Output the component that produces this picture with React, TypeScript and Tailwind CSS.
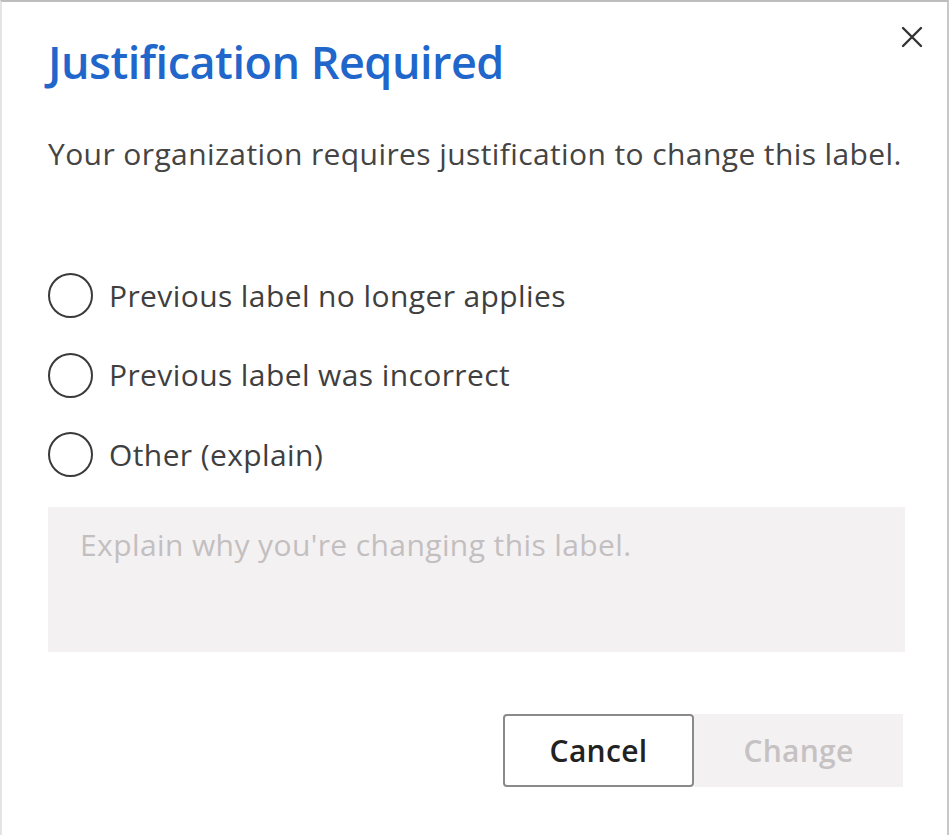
import React, { useState } from "react";

const font = { fontFamily: '"Open Sans", "Noto Sans", sans-serif' };

const options = [
  "Previous label no longer applies",
  "Previous label was incorrect",
  "Other (explain)",
];

function Radio({ label, checked, onClick }: { label: string; checked: boolean; onClick: () => void }) {
  return (
    <button type="button" onClick={onClick} className="flex h-[79.5px] items-center gap-[16px] text-left">
      <span className="flex h-[45px] w-[45px] items-center justify-center rounded-full border-[2.5px] border-[#3a3a3a]">
        {checked && <span className="h-[22px] w-[22px] rounded-full bg-[#3a3a3a]" />}
      </span>
      <span className="text-[30px] leading-[40px] tracking-[0.4px] text-[#3f3f3f]">{label}</span>
    </button>
  );
}

export default function App() {
  const [picked, setPicked] = useState<number | null>(null);
  return (
    <div style={font} className="h-[835px] w-[952px] bg-white">
      <div className="relative flex h-[835px] w-[949px] flex-col border-x-2 border-t-2 border-x-[#c8c8c8] border-t-[#bdbdbd] border-l-[#e4e4e4] pl-[46px] pr-[44px]">
        <button type="button" className="absolute right-[24px] top-[24px] text-[#333]" aria-label="Close">
          <svg width="22" height="22" viewBox="0 0 22 22" fill="none" stroke="currentColor" strokeWidth="2.4" strokeLinecap="round">
            <path d="M2 2 L20 20 M20 2 L2 20" />
          </svg>
        </button>
        <h1 className="mt-[30px] text-[45px] font-semibold leading-[60px] tracking-[-0.5px] text-[#2066cb]">
          Justification Required
        </h1>
        <p className="mt-[42px] text-[30px] leading-[40px] tracking-[0.4px] text-[#444]">
          Your organization requires justification to change this label.
        </p>
        <div className="mt-[82px] flex flex-col items-start">
          {options.map((o, i) => (
            <Radio key={o} label={o} checked={picked === i} onClick={() => setPicked(i)} />
          ))}
        </div>
        <textarea
          placeholder="Explain why you're changing this label."
          className="mt-[12px] h-[145px] w-[857px] resize-none bg-[#f4f1f2] px-[32px] py-[18px] text-[30px] leading-[40px] tracking-[0.4px] text-[#333] placeholder:text-[#c3bfc0] focus:outline-none"
        />
        <div className="mt-[62px] flex justify-end">
          <button
            type="button"
            className="h-[73px] w-[191px] rounded-[4px] border-2 border-[#8a8a8a] bg-white text-[30px] font-semibold tracking-[0.3px] text-[#222]"
          >
            Cancel
          </button>
          <button
            type="button"
            disabled
            className="h-[73px] w-[209px] bg-[#f4f1f2] text-[30px] font-semibold tracking-[0.3px] text-[#c6c2c3]"
          >
            Change
          </button>
        </div>
      </div>
    </div>
  );
}
